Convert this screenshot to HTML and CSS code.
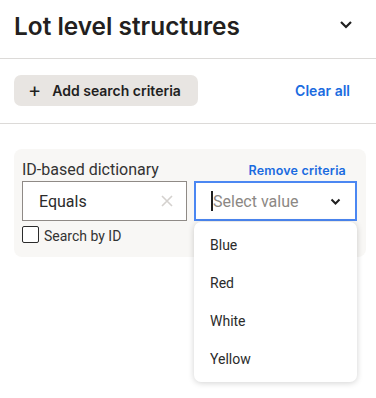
FILE: index.html
```html
<!DOCTYPE html>
<html lang="en">
<head>
    <meta charset="UTF-8">
    <meta name="viewport" content="width=device-width, initial-scale=1.0">
    <title>Lot level structures</title>
    <link rel="stylesheet" href="styles.css">
</head>
<body>
    <div class="panel">
        <div class="panel-header">
            <h1>Lot level structures</h1>
            <svg class="chevron" width="14" height="9" viewBox="0 0 14 9"><path d="M2 2l5 5 5-5" fill="none" stroke="#1f1f1f" stroke-width="2.2"/></svg>
        </div>

        <div class="toolbar">
            <button type="button" class="add-button"><span class="plus">+</span>Add search criteria</button>
            <a class="link-button" href="#">Clear all</a>
        </div>

        <div class="criteria">
            <div class="criteria-card">
                <div class="criteria-top">
                    <span class="criteria-label">ID-based dictionary</span>
                    <a class="remove-link" href="#">Remove criteria</a>
                </div>
                <div class="criteria-fields">
                    <div class="field operator">
                        <span>Equals</span>
                        <svg width="12" height="12" viewBox="0 0 12 12"><path d="M1 1l10 10M11 1L1 11" stroke="#d4d1ce" stroke-width="1.6"/></svg>
                    </div>
                    <div class="select-wrap">
                        <div class="field value">
                            <span class="caret"></span>
                            <span class="placeholder">Select value</span>
                            <svg class="select-chevron" width="11" height="7" viewBox="0 0 11 7"><path d="M1.5 1.5l4 4 4-4" fill="none" stroke="#1f1f1f" stroke-width="2"/></svg>
                        </div>
                        <ul class="dropdown">
                            <li>Blue</li>
                            <li>Red</li>
                            <li>White</li>
                            <li>Yellow</li>
                        </ul>
                    </div>
                </div>
                <label class="check"><span class="box"></span>Search by ID</label>
            </div>
        </div>
    </div>
</body>
</html>
```

FILE: styles.css
```css
html, body {
    min-height: 100%;
    height: 100%;
}
body {
    margin: 0;
    padding: 0;
    background: #ffffff;
    font-family: Roboto, "Liberation Sans", sans-serif;
    color: #2b2b2b;
}
.panel {
    width: 376px;
    min-height: 398px;
}
.panel-header {
    display: flex;
    align-items: center;
    justify-content: space-between;
    height: 59px;
    padding: 0 23px 0 14px;
    border-bottom: 1px solid #dcdad8;
    box-sizing: border-box;
}
h1 {
    margin: 0;
    margin-top: -6px;
    font-family: Inter, "Noto Sans", sans-serif;
    font-size: 24.4px;
    font-weight: 600;
    color: #231f20;
}
.chevron {
    margin-top: -10px;
}
.toolbar {
    display: flex;
    align-items: center;
    justify-content: space-between;
    height: 65px;
    padding: 0 26px 0 14px;
    border-bottom: 1px solid #dcdad8;
    box-sizing: border-box;
}
.add-button {
    display: flex;
    align-items: center;
    height: 31px;
    width: 184px;
    margin-top: -1px;
    padding: 0 0 0 14px;
    border: none;
    border-radius: 7px;
    background: #e8e5e2;
    font-family: Inter, "Noto Sans", sans-serif;
    font-size: 14px;
    font-weight: 600;
    color: #1f1f1f;
    cursor: pointer;
}
.plus {
    font-size: 20px;
    font-weight: 400;
    margin-right: 11px;
    margin-top: -2px;
}
.link-button {
    font-family: Inter, "Noto Sans", sans-serif;
    font-size: 14px;
    font-weight: 600;
    color: #1a6be0;
    text-decoration: none;
    margin-top: -1px;
}
.criteria {
    padding: 25px 10px 0 14px;
}
.criteria-card {
    background: #f8f7f5;
    border-radius: 8px;
    padding: 8px 9px 10px 8px;
    height: 90px;
}
.criteria-top {
    display: flex;
    justify-content: space-between;
    align-items: center;
    height: 24px;
}
.criteria-label {
    font-size: 16px;
    color: #333333;
}
.remove-link {
    font-family: Inter, "Noto Sans", sans-serif;
    font-size: 12.5px;
    font-weight: 600;
    color: #1a6be0;
    text-decoration: none;
    margin-right: 11px;
    margin-top: 2px;
    letter-spacing: 0.2px;
}
.criteria-fields {
    display: flex;
    gap: 7px;
}
.field {
    box-sizing: border-box;
    height: 40px;
    display: flex;
    align-items: center;
    background: #ffffff;
    font-size: 16px;
}
.operator {
    width: 165px;
    border: 1px solid #8f8a86;
    padding: 0 13px 0 16px;
    justify-content: space-between;
    color: #2b2b2b;
}
.select-wrap {
    position: relative;
}
.value {
    width: 163px;
    border: 2px solid #4b87f2;
    padding: 0 14px 0 15px;
}
.caret {
    width: 2px;
    height: 20px;
    background: #1f1f1f;
}
.placeholder {
    color: #8c8884;
    flex: 1;
}
.dropdown {
    position: absolute;
    top: 41px;
    left: 0;
    width: 163px;
    box-sizing: border-box;
    margin: 0;
    padding: 4px 0;
    list-style: none;
    background: #ffffff;
    border-radius: 7px;
    box-shadow: 0 1px 6px rgba(0, 0, 0, 0.18);
    z-index: 2;
}
.dropdown li {
    height: 38px;
    line-height: 38px;
    padding-left: 16px;
    font-size: 14px;
    color: #2b2b2b;
}
.check {
    display: flex;
    align-items: center;
    margin-top: 7px;
    font-size: 14px;
    color: #333333;
}
.box {
    box-sizing: border-box;
    width: 17px;
    height: 17px;
    border: 1.5px solid #2b2b2b;
    border-radius: 2px;
    background: #ffffff;
    margin-right: 5px;
    margin-top: -3px;
}
```
